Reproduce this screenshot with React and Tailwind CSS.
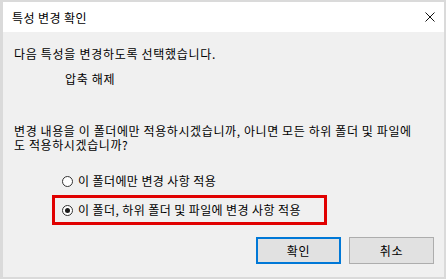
export default function App() {
  const font = { fontFamily: '"Noto Sans CJK KR", "Noto Sans", sans-serif' };
  return (
    <div className="w-[446px] h-[279px] bg-[#dadada] pt-[2px] pl-[3px] pr-[2px] pb-[2px] flex flex-col text-black" style={font}>
      <div className="h-[30px] bg-white flex items-center justify-between pl-[9px] pr-[7px] shrink-0">
        <span className="text-[12px] leading-[16px] tracking-[0.4px] mt-[1px]">특성 변경 확인</span>
        <svg width="10" height="10" viewBox="0 0 10 10" className="mr-[2px]">
          <path d="M0.5 0.5 L9.5 9.5 M9.5 0.5 L0.5 9.5" stroke="#111" strokeWidth="1" />
        </svg>
      </div>
      <div className="flex-1 bg-[#f0f0f0] pl-[11px] pt-[14px] flex flex-col text-[12px] leading-[16px] tracking-[0.7px]">
        <div>다음 특성을 변경하도록 선택했습니다.</div>
        <div className="pl-[51px] mt-[9px]">압축 해제</div>
        <div className="mt-[37px] leading-[14px] tracking-[0.6px]">
          <div>변경 내용을 이 폴더에만 적용하시겠습니까, 아니면 모든 하위 폴더 및 파일에</div>
          <div>도 적용하시겠습니까?</div>
        </div>
        <div className="mt-[21px] pl-[48px] flex items-center gap-[5px] tracking-[0.4px]">
          <span className="w-[11px] h-[11px] rounded-full border border-[#333] bg-white shrink-0" />
          <span>이 폴더에만 변경 사항 적용</span>
        </div>
        <div className="mt-[6px] ml-[38px] w-[275px] h-[30px] border-[3px] border-[#e00000] flex items-center pl-[7px] gap-[5px] tracking-[0.4px]">
          <span className="w-[11px] h-[11px] rounded-full border border-[#333] bg-white shrink-0 flex items-center justify-center">
            <span className="w-[5px] h-[5px] rounded-full bg-[#1a1a1a]" />
          </span>
          <span>이 폴더, 하위 폴더 및 파일에 변경 사항 적용</span>
        </div>
        <div className="mt-[12px] flex justify-end gap-[8px] pr-[10px]">
          <button className="w-[85px] h-[27px] bg-[#e1e1e1] border-2 border-[#0078d7] text-[12px] tracking-[0.7px]">확인</button>
          <button className="w-[85px] h-[27px] bg-[#e1e1e1] border border-[#adadad] text-[12px] tracking-[0.7px]">취소</button>
        </div>
      </div>
    </div>
  );
}
